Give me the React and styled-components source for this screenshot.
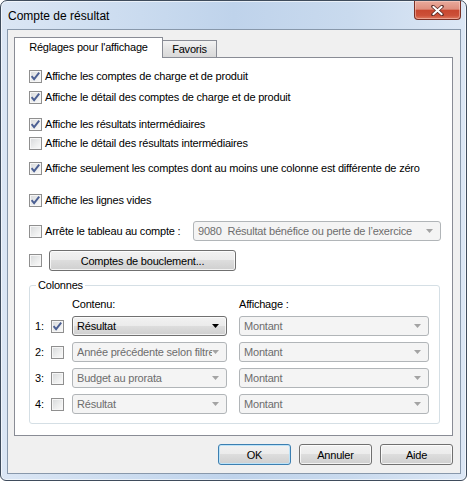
import React from "react"
import styled, { createGlobalStyle } from "styled-components"

const GlobalStyle = createGlobalStyle`
  html, body {
    margin: 0;
    padding: 0;
    background: #fff;
  }
  body {
    font-family: "Liberation Sans", Arial, sans-serif;
    font-size: 11px;
    letter-spacing: -0.2px;
    color: #000;
  }
  * {
    box-sizing: border-box;
  }
`

const Window = styled.div`
  width: 467px;
  height: 481px;
  border: 1px solid #3f4c5c;
  border-radius: 7px 7px 6px 6px;
  background: linear-gradient(90deg, #dbe6f4 0%, #cadbef 30%, #bfd3eb 50%, #c9daee 75%, #dce7f5 100%);
  box-shadow: inset 0 0 0 1px rgba(255, 255, 255, 0.6);
  padding: 0 5px 6px 6px;
  display: flex;
  flex-direction: column;
`

const TitleBar = styled.div`
  height: 28px;
  display: flex;
  align-items: flex-start;
  padding-left: 1px;
`

const Title = styled.span`
  align-self: center;
  font-size: 12px;
  letter-spacing: 0;
  line-height: 14px;
  padding-top: 1px;
`

const CloseButton = styled.div`
  margin-left: auto;
  width: 47px;
  height: 19px;
  border: 1px solid #7a3025;
  border-top: none;
  border-radius: 0 0 4px 4px;
  background: linear-gradient(#e9aa9c 0%, #df8f7e 45%, #c8472f 52%, #cc5038 80%, #df7a60 100%);
  box-shadow: inset 0 0 0 1px rgba(255, 220, 210, 0.45);
  display: flex;
  align-items: center;
  justify-content: center;
`

const Client = styled.div`
  flex: 1;
  border: 1px solid #8898ab;
  background: #f0f0f0;
  padding: 7px 7px 8px 6px;
  display: flex;
  flex-direction: column;
`

const TabStrip = styled.div`
  display: flex;
  align-items: flex-end;
  height: 21px;
  margin-bottom: -1px;
  position: relative;
  z-index: 1;
`

const Tab = styled.div`
  height: ${p => (p.$active ? 21 : 17)}px;
  width: ${p => (p.$active ? 149 : 54)}px;
  margin-bottom: ${p => (p.$active ? 0 : 1)}px;
  border: 1px solid #898c95;
  border-bottom: none;
  border-left: ${p => (p.$active ? "1px solid #898c95" : "none")};
  background: ${p => (p.$active ? "#fff" : "linear-gradient(#f3f3f3, #e4e4e4 50%, #d9d9d9)")};
  text-align: center;
  line-height: 13px;
  padding-top: ${p => (p.$active ? 3 : 2)}px;
`

const Panel = styled.div`
  flex: 1;
  border: 1px solid #898c95;
  background: #fff;
  padding: 10px 0 0 14px;
  display: flex;
  flex-direction: column;
`

const Row = styled.div`
  display: flex;
  align-items: center;
  height: ${p => p.$height || 17}px;
  margin-top: ${p => p.$top || 0}px;
  padding-right: 11px;
  gap: ${p => p.$gap || 3}px;
`

const Label = styled.span`
  line-height: 13px;
  white-space: nowrap;
`

const Box = styled.span`
  flex: none;
  width: 13px;
  height: 13px;
  border: 1px solid #8f8f8f;
  background: linear-gradient(135deg, #d6d8da 0%, #eceded 55%, #fbfbfb 100%);
  box-shadow: inset 0 0 0 1px #f6f6f6;
  display: flex;
  align-items: center;
  justify-content: center;
`

const Combo = styled.div`
  flex: none;
  width: ${p => p.$width}px;
  height: 20px;
  margin-left: ${p => (p.$push ? "auto" : "0")};
  border: 1px solid ${p => (p.$disabled ? "#b1b5b8" : "#707070")};
  border-radius: 3px;
  background: ${p =>
    p.$disabled
      ? "#f4f4f4"
      : "linear-gradient(#f2f2f2 0%, #ebebeb 49%, #dddddd 50%, #cfcfcf 100%)"};
  box-shadow: ${p => (p.$disabled ? "none" : "inset 0 0 0 1px rgba(255,255,255,0.7)")};
  color: ${p => (p.$disabled ? "#6d6d6d" : "#000")};
  display: flex;
  align-items: center;
  padding: 0 7px 0 4px;
  white-space: pre;
  overflow: hidden;
`

const ComboText = styled.span`
  flex: 1;
  overflow: hidden;
  line-height: 13px;
`

const Button = styled.button`
  flex: none;
  width: ${p => p.$width || 73}px;
  height: 21px;
  padding: 0;
  border: 1px solid ${p => (p.$primary ? "#3c7fb1" : "#707070")};
  border-radius: 3px;
  background: linear-gradient(#f2f2f2 0%, #ebebeb 49%, #dddddd 50%, #cfcfcf 100%);
  box-shadow: inset 0 0 0 1px ${p => (p.$primary ? "#bde3f8" : "rgba(255,255,255,0.75)")};
  font-family: inherit;
  font-size: 11px;
  letter-spacing: -0.2px;
  color: #000;
`

const Group = styled.fieldset`
  align-self: flex-start;
  margin: 8px 0 0 0;
  padding: 0 10px 9px 5px;
  border: 1px solid #d5dfe5;
  border-radius: 3px;
  min-inline-size: auto;
`

const Legend = styled.legend`
  margin-left: 1px;
  padding: 0 2px;
  line-height: 13px;
`

const ColumnsGrid = styled.div`
  display: grid;
  grid-template-columns: 16px 21px 167px 190px;
  row-gap: 6px;
  align-items: center;
  padding-top: 6px;
`

const HeadCell = styled.span`
  line-height: 12px;
  grid-column: ${p => p.$col};
`

const Num = styled.span`
  line-height: 13px;
`

const Footer = styled.div`
  display: flex;
  justify-content: flex-end;
  gap: 8px;
  margin-top: 8px;
`

function Check({ checked }) {
  return (
    <Box>
      {checked && (
        <svg width="11" height="11" viewBox="0 0 11 11">
          <path d="M1.6 5.2 L4.1 8.2 L9.2 1.6" fill="none" stroke="#4b5f93" strokeWidth="1.9" />
        </svg>
      )}
    </Box>
  )
}

function Arrow({ disabled }) {
  return (
    <svg width="7" height="4" viewBox="0 0 7 4">
      <path d="M0 0 H7 L3.5 4 Z" fill={disabled ? "#a3a3a3" : "#000"} />
    </svg>
  )
}

const columns = [
  { n: "1:", checked: true, content: "Résultat", enabled: true },
  { n: "2:", content: "Année précédente selon filtre" },
  { n: "3:", content: "Budget au prorata" },
  { n: "4:", content: "Résultat" },
]

const options = [
  { text: "Affiche les comptes de charge et de produit", checked: true, top: 0 },
  { text: "Affiche le détail des comptes de charge et de produit", checked: true, top: 4 },
  { text: "Affiche les résultats intermédiaires", checked: true, top: 10 },
  { text: "Affiche le détail des résultats intermédiaires", checked: false, top: 2 },
  { text: "Affiche seulement les comptes dont au moins une colonne est différente de zéro", checked: true, top: 8 },
  { text: "Affiche les lignes vides", checked: true, top: 15 },
]

export default function App() {
  return (
    <>
      <GlobalStyle />
      <Window>
        <TitleBar>
          <Title>Compte de résultat</Title>
          <CloseButton>
            <svg width="13" height="11" viewBox="0 0 13 11">
              <path d="M2 1.5 L11 9.5 M11 1.5 L2 9.5" stroke="#5a2a26" strokeWidth="3.6" strokeLinecap="round" />
              <path d="M2.3 1.8 L10.7 9.2 M10.7 1.8 L2.3 9.2" stroke="#fff" strokeWidth="2" strokeLinecap="round" />
            </svg>
          </CloseButton>
        </TitleBar>
        <Client>
          <TabStrip>
            <Tab $active>Réglages pour l'affichage</Tab>
            <Tab>Favoris</Tab>
          </TabStrip>
          <Panel>
            {options.map(o => (
              <Row key={o.text} $top={o.top}>
                <Check checked={o.checked} />
                <Label>{o.text}</Label>
              </Row>
            ))}
            <Row $top={12} $height={20}>
              <Check />
              <Label>Arrête le tableau au compte :</Label>
              <Combo $disabled $push $width={248}>
                <ComboText>9080  Résultat bénéfice ou perte de l’exercice</ComboText>
                <Arrow disabled />
              </Combo>
            </Row>
            <Row $top={9} $height={21} $gap={7}>
              <Check />
              <Button $width={187}>Comptes de bouclement...</Button>
            </Row>
            <Group>
              <Legend>Colonnes</Legend>
              <ColumnsGrid>
                <HeadCell $col={3}>Contenu:</HeadCell>
                <HeadCell $col={4}>Affichage :</HeadCell>
                {columns.map(c => (
                  <React.Fragment key={c.n}>
                    <Num>{c.n}</Num>
                    <Check checked={c.checked} />
                    <Combo $width={155} $disabled={!c.enabled}>
                      <ComboText>{c.content}</ComboText>
                      <Arrow disabled={!c.enabled} />
                    </Combo>
                    <Combo $width={190} $disabled>
                      <ComboText>Montant</ComboText>
                      <Arrow disabled />
                    </Combo>
                  </React.Fragment>
                ))}
              </ColumnsGrid>
            </Group>
          </Panel>
          <Footer>
            <Button $primary>OK</Button>
            <Button>Annuler</Button>
            <Button>Aide</Button>
          </Footer>
        </Client>
      </Window>
    </>
  )
}
